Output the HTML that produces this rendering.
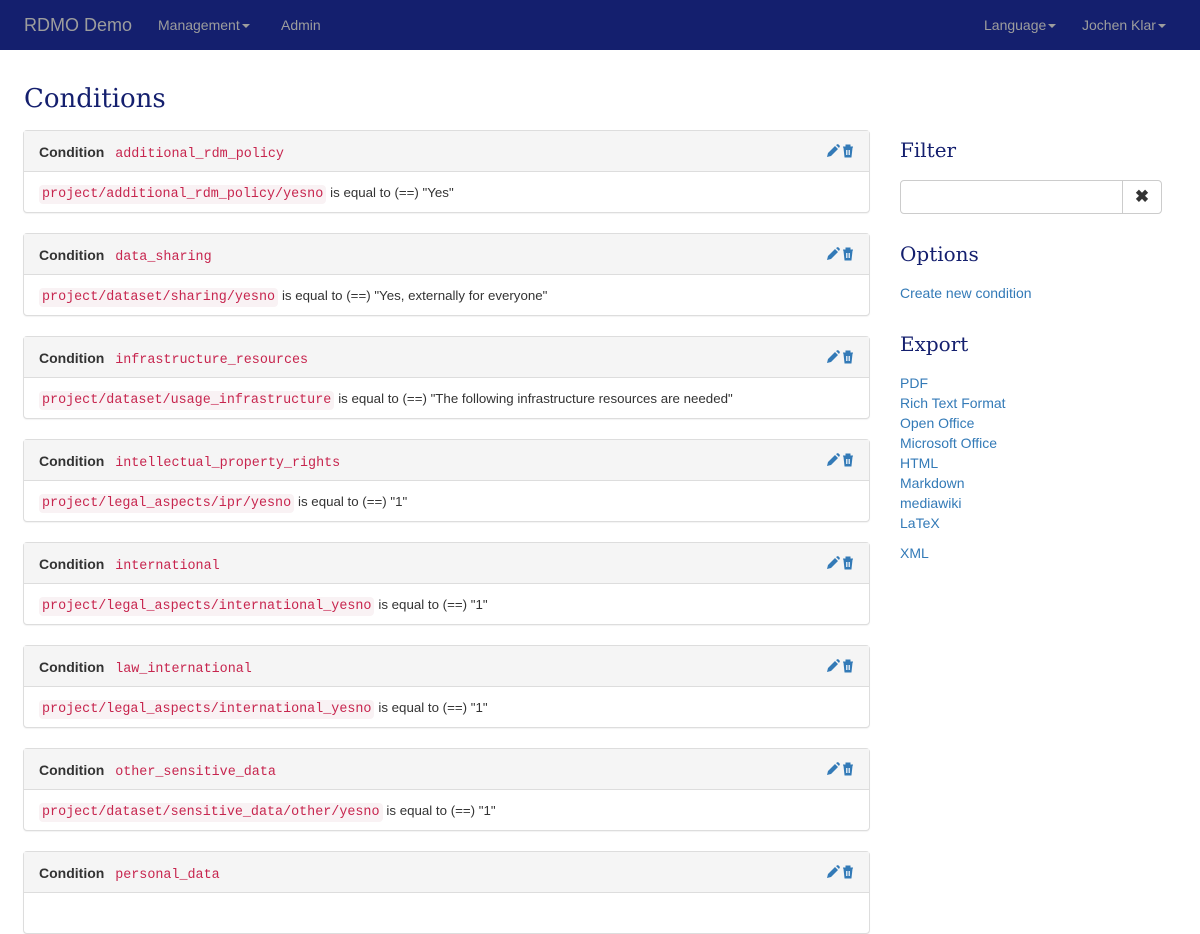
<!DOCTYPE html>
<html><head><meta charset="utf-8"><style>
*{box-sizing:border-box}
body{margin:0;background:#fff;font-family:"Liberation Sans",sans-serif;font-size:14px;color:#333;width:1200px;height:900px;overflow:hidden}
.nav{height:50px;background:#141f6e;position:relative;color:#9d9d9d}
.nav span{position:absolute;top:17px;font-size:14px}
.brand{left:24px;top:15px!important;font-size:18px!important}
.caret{display:inline-block;border-top:4px solid #9d9d9d;border-left:4px solid transparent;border-right:4px solid transparent;vertical-align:middle;margin-left:2px}
h1{position:absolute;left:24px;top:84px;margin:0;font-family:"DejaVu Serif",serif;font-weight:normal;font-size:26px;color:#141f6e}
.panel{position:absolute;left:23px;width:847px;height:83px;border:1px solid #ddd;border-radius:4px;box-shadow:0 1px 1px rgba(0,0,0,.05);background:#fff}
.ph{height:41px;background:#f5f5f5;border-bottom:1px solid #ddd;padding:13px 15px 0;position:relative}
.ph b{font-weight:bold}
.pb{padding:12px 15px 0}
.t{font-size:13.3px}
code{font-family:"Liberation Mono",monospace;font-size:13.4px;color:#c7254e;background:#f9f2f4;padding:2px 3px;border-radius:4px}
.ph code{background:transparent;margin-left:4px}
.ic{position:absolute;right:14px;top:13px}
.side{position:absolute;left:900px}
.side h2{font-family:"DejaVu Serif",serif;font-weight:normal;font-size:20px;color:#141f6e;margin:0}
a{color:#337ab7;text-decoration:none}
.links div{height:20px}
</style></head><body>
<div class="nav"><span class="brand">RDMO Demo</span><span style="left:158px">Management<i class="caret"></i></span><span style="left:281px">Admin</span><span style="left:984px">Language<i class="caret"></i></span><span style="left:1082px">Jochen Klar<i class="caret"></i></span></div>
<h1>Conditions</h1>

<div class="panel" style="top:130px"><div class="ph"><b>Condition</b> <code>additional_rdm_policy</code><span class="ic"><svg width="30" height="14"><path d="M2 13l1-4 7-7 3 3-7 7z M11 1l2-1 2 2-1 2z" fill="#337ab7"/><path d="M18 3h10M21 3V1h4v2M19 4h8l-1 9h-6z" fill="#337ab7" stroke="#337ab7" stroke-width="1"/><path d="M21.5 6v5M23 6v5M24.5 6v5" stroke="#fff" stroke-width=".8"/></svg></span></div><div class="pb"><code>project/additional_rdm_policy/yesno</code> <span class="t">is equal to (==) "Yes"</span></div></div>
<div class="panel" style="top:233px"><div class="ph"><b>Condition</b> <code>data_sharing</code><span class="ic"><svg width="30" height="14"><path d="M2 13l1-4 7-7 3 3-7 7z M11 1l2-1 2 2-1 2z" fill="#337ab7"/><path d="M18 3h10M21 3V1h4v2M19 4h8l-1 9h-6z" fill="#337ab7" stroke="#337ab7"/><path d="M21.5 6v5M23 6v5M24.5 6v5" stroke="#fff" stroke-width=".8"/></svg></span></div><div class="pb"><code>project/dataset/sharing/yesno</code> <span class="t">is equal to (==) "Yes, externally for everyone"</span></div></div>
<div class="panel" style="top:336px"><div class="ph"><b>Condition</b> <code>infrastructure_resources</code><span class="ic"><svg width="30" height="14"><path d="M2 13l1-4 7-7 3 3-7 7z M11 1l2-1 2 2-1 2z" fill="#337ab7"/><path d="M18 3h10M21 3V1h4v2M19 4h8l-1 9h-6z" fill="#337ab7" stroke="#337ab7"/><path d="M21.5 6v5M23 6v5M24.5 6v5" stroke="#fff" stroke-width=".8"/></svg></span></div><div class="pb"><code>project/dataset/usage_infrastructure</code> <span class="t">is equal to (==) "The following infrastructure resources are needed"</span></div></div>
<div class="panel" style="top:439px"><div class="ph"><b>Condition</b> <code>intellectual_property_rights</code><span class="ic"><svg width="30" height="14"><path d="M2 13l1-4 7-7 3 3-7 7z M11 1l2-1 2 2-1 2z" fill="#337ab7"/><path d="M18 3h10M21 3V1h4v2M19 4h8l-1 9h-6z" fill="#337ab7" stroke="#337ab7"/><path d="M21.5 6v5M23 6v5M24.5 6v5" stroke="#fff" stroke-width=".8"/></svg></span></div><div class="pb"><code>project/legal_aspects/ipr/yesno</code> <span class="t">is equal to (==) "1"</span></div></div>
<div class="panel" style="top:542px"><div class="ph"><b>Condition</b> <code>international</code><span class="ic"><svg width="30" height="14"><path d="M2 13l1-4 7-7 3 3-7 7z M11 1l2-1 2 2-1 2z" fill="#337ab7"/><path d="M18 3h10M21 3V1h4v2M19 4h8l-1 9h-6z" fill="#337ab7" stroke="#337ab7"/><path d="M21.5 6v5M23 6v5M24.5 6v5" stroke="#fff" stroke-width=".8"/></svg></span></div><div class="pb"><code>project/legal_aspects/international_yesno</code> <span class="t">is equal to (==) "1"</span></div></div>
<div class="panel" style="top:645px"><div class="ph"><b>Condition</b> <code>law_international</code><span class="ic"><svg width="30" height="14"><path d="M2 13l1-4 7-7 3 3-7 7z M11 1l2-1 2 2-1 2z" fill="#337ab7"/><path d="M18 3h10M21 3V1h4v2M19 4h8l-1 9h-6z" fill="#337ab7" stroke="#337ab7"/><path d="M21.5 6v5M23 6v5M24.5 6v5" stroke="#fff" stroke-width=".8"/></svg></span></div><div class="pb"><code>project/legal_aspects/international_yesno</code> <span class="t">is equal to (==) "1"</span></div></div>
<div class="panel" style="top:748px"><div class="ph"><b>Condition</b> <code>other_sensitive_data</code><span class="ic"><svg width="30" height="14"><path d="M2 13l1-4 7-7 3 3-7 7z M11 1l2-1 2 2-1 2z" fill="#337ab7"/><path d="M18 3h10M21 3V1h4v2M19 4h8l-1 9h-6z" fill="#337ab7" stroke="#337ab7"/><path d="M21.5 6v5M23 6v5M24.5 6v5" stroke="#fff" stroke-width=".8"/></svg></span></div><div class="pb"><code>project/dataset/sensitive_data/other/yesno</code> <span class="t">is equal to (==) "1"</span></div></div>
<div class="panel" style="top:851px"><div class="ph"><b>Condition</b> <code>personal_data</code><span class="ic"><svg width="30" height="14"><path d="M2 13l1-4 7-7 3 3-7 7z M11 1l2-1 2 2-1 2z" fill="#337ab7"/><path d="M18 3h10M21 3V1h4v2M19 4h8l-1 9h-6z" fill="#337ab7" stroke="#337ab7"/><path d="M21.5 6v5M23 6v5M24.5 6v5" stroke="#fff" stroke-width=".8"/></svg></span></div><div class="pb"></div></div>

<div class="side" style="top:138px"><h2>Filter</h2></div>
<div class="side" style="top:180px;width:262px;height:34px;border:1px solid #ccc;border-radius:4px"><div style="position:absolute;right:0;top:0;width:39px;height:32px;border-left:1px solid #ccc;text-align:center;line-height:32px;font-size:17px;font-weight:bold;color:#333">✖</div></div>
<div class="side" style="top:242px"><h2>Options</h2></div>
<div class="side" style="top:285px"><a>Create new condition</a></div>
<div class="side" style="top:332px"><h2>Export</h2></div>
<div class="side links" style="top:375px"><div><a>PDF</a></div><div><a>Rich Text Format</a></div><div><a>Open Office</a></div><div><a>Microsoft Office</a></div><div><a>HTML</a></div><div><a>Markdown</a></div><div><a>mediawiki</a></div><div><a>LaTeX</a></div><div style="margin-top:10px"><a>XML</a></div></div>
</body></html>
